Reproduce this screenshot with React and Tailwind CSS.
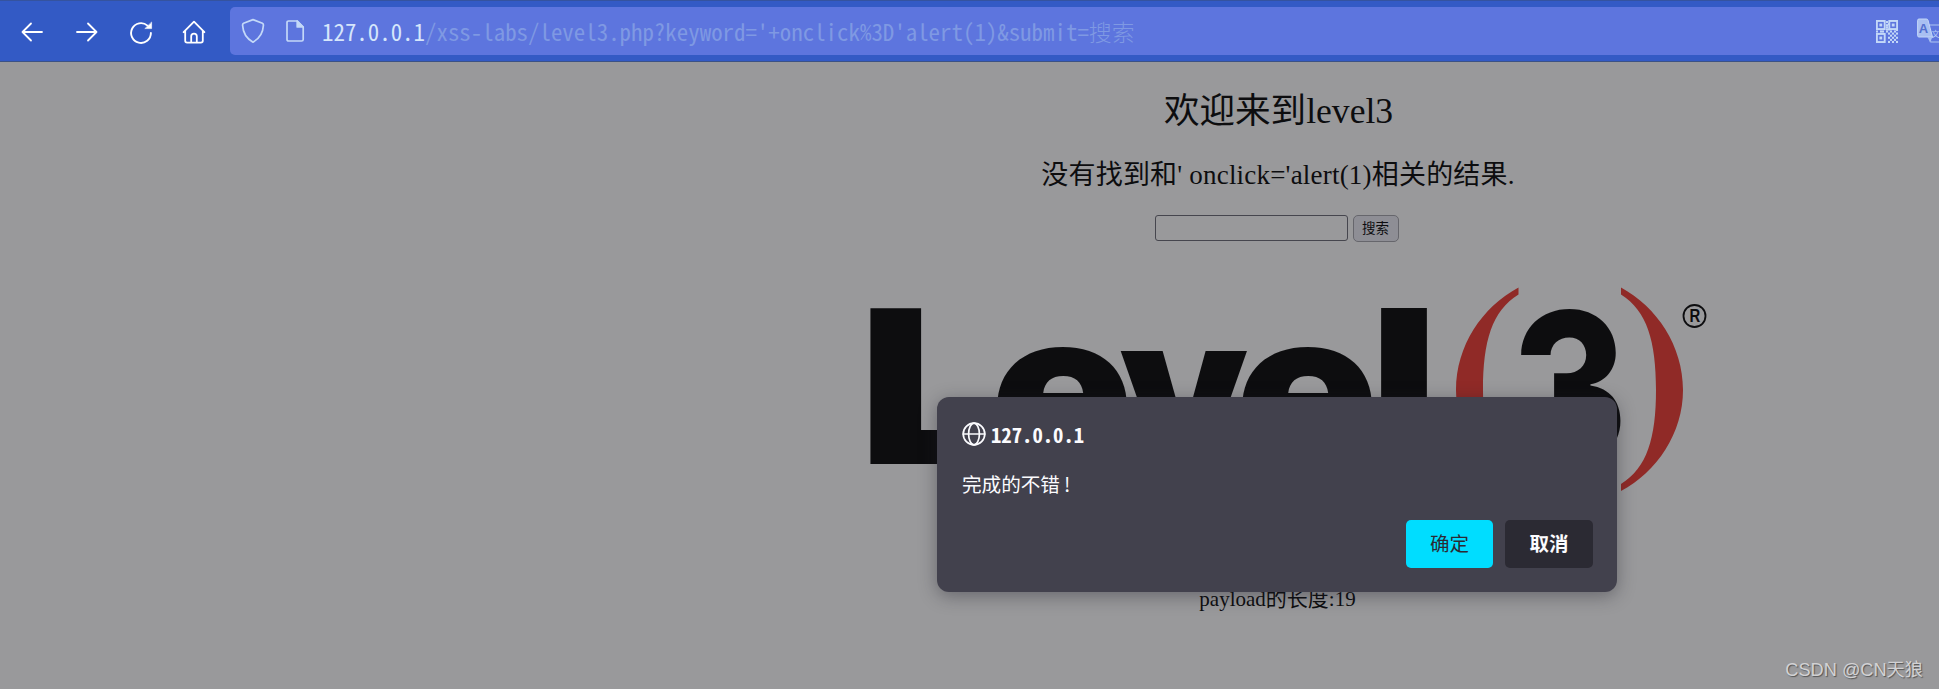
const stroke = { fill: 'none', stroke: 'currentColor', strokeLinecap: 'round', strokeLinejoin: 'round' };

function BackIcon() {
  return (
    <svg className="h-6 w-6" viewBox="0 0 24 24" {...stroke} strokeWidth="1.8">
      <path d="M22 12H2.5M11 3.5L2.5 12L11 20.5" />
    </svg>
  );
}

function ForwardIcon() {
  return (
    <svg className="h-6 w-6" viewBox="0 0 24 24" {...stroke} strokeWidth="1.8">
      <path d="M2 12H21.5M13 3.5L21.5 12L13 20.5" />
    </svg>
  );
}

function ReloadIcon() {
  return (
    <svg className="h-6 w-6" viewBox="0 0 24 24" {...stroke} strokeWidth="1.9">
      <path d="M21.9 13A9.9 9.9 0 1 1 18.5 5.6" />
      <path d="M22.6 2.4V8.6H16.2Z" fill="currentColor" strokeWidth="0.6" />
    </svg>
  );
}

function HomeIcon() {
  return (
    <svg className="h-6 w-6" viewBox="0 0 24 24" {...stroke} strokeWidth="1.8">
      <path d="M1.6 12.2L12 1.6L22.4 12.2M3.2 10.8V20.8Q3.2 22.6 5.2 22.6H18.8Q20.8 22.6 20.8 20.8V10.8M9.2 22.6V16.2Q9.2 13.6 12 13.6Q14.8 13.6 14.8 16.2V22.6" />
    </svg>
  );
}

function ShieldIcon() {
  return (
    <svg className="h-[26px] w-6" viewBox="0 0 24 26" {...stroke} strokeWidth="1.7">
      <path d="M12 1.6L21.4 5.2Q22.6 5.8 22.4 7.4Q21.8 18.6 12 24.2Q2.2 18.6 1.6 7.4Q1.4 5.8 2.6 5.2Z" />
    </svg>
  );
}

function PageIcon() {
  return (
    <svg className="h-6 w-5" viewBox="0 0 20 24" {...stroke} strokeWidth="1.7">
      <path d="M3.6 2H12.2L18.2 8V20.4Q18.2 22 16.6 22H3.6Q2 22 2 20.4V3.6Q2 2 3.6 2Z" />
      <path d="M12.2 2V8H18.2Z" fill="currentColor" />
    </svg>
  );
}

function QrIcon() {
  const cells = [
    [10, 4], [10, 1], [12, 3], [10, 6], [12, 8], [14, 10], [10, 10], [12, 12], [16, 12], [20, 12], [18, 10],
    [18, 14], [14, 14], [10, 8], [0, 10], [4, 10], [6, 10], [14, 18], [18, 18], [12, 16], [16, 16], [20, 16],
    [12, 20], [16, 20], [20, 20], [20, 8.5],
  ];
  return (
    <svg className="h-[23px] w-[22px]" viewBox="0 0 22 22" fill="none" stroke="currentColor" strokeWidth="1.9" preserveAspectRatio="none">
      <rect x="0.9" y="0.9" width="7.8" height="7.8" />
      <rect x="13.3" y="0.9" width="7.8" height="7.8" />
      <rect x="0.9" y="13.3" width="7.8" height="7.8" />
      <g fill="currentColor" stroke="none">
        <rect x="3.4" y="3.4" width="2.8" height="2.8" />
        <rect x="15.8" y="3.4" width="2.8" height="2.8" />
        <rect x="3.4" y="15.8" width="2.8" height="2.8" />
        {cells.map(([x, y]) => (
          <rect key={`${x}-${y}`} x={x} y={y} width="2" height="2" />
        ))}
      </g>
    </svg>
  );
}

function TranslateIcon() {
  return (
    <svg className="h-[26px] w-[32px] shrink-0" viewBox="0 0 32 26">
      <path d="M12 7H30V24H14L11 19" fill="none" stroke="#93abec" strokeWidth="1.5" />
      <path d="M2 1H9.5Q10.6 1 11 2.2L15.5 19H2Q0.6 19 0.6 17.6V2.4Q0.6 1 2 1Z" fill="#a9c0f2" stroke="#c3d6f8" strokeWidth="1" />
      <path d="M11 19H15.5L13 24.5Z" fill="#a9c0f2" />
      <text x="6.4" y="15.2" textAnchor="middle" fontFamily="Liberation Sans" fontWeight="700" fontSize="13" fill="#5470cf">A</text>
      <text x="18.6" y="19.2" textAnchor="middle" fontFamily="Noto Sans CJK SC" fontSize="8.5" fill="#b9cdf6">文</text>
    </svg>
  );
}

function GlobeIcon() {
  return (
    <svg className="h-6 w-6 shrink-0" viewBox="0 0 24 24" {...stroke} strokeWidth="1.7">
      <circle cx="12" cy="12" r="10.8" />
      <ellipse cx="12" cy="12" rx="5.4" ry="10.8" />
      <path d="M1.2 12H22.8" />
    </svg>
  );
}

/* Letters of the wordmark: glyph, left edge, horizontal and vertical scale */
const letters = [
  ['L', 10.4, 1.2, 1],
  ['e', 142.2, 1.105, 0.985],
  ['v', 271.5, 0.952, 0.97],
  ['e', 387.2, 1.105, 0.985],
  ['l', 521.5, 1.09, 1],
];

function LevelLogo() {
  return (
    <svg className="block h-[220px] w-[860px] shrink-0" viewBox="0 0 860 220">
      <g fontFamily="Inter, sans-serif" fontWeight="900" fontSize="214" fill="#0d0d0f">
        {letters.map(([glyph, x, sx, sy]) => (
          <text key={x} transform={`translate(${x} 184) scale(${sx} ${sy})`}>{glyph}</text>
        ))}
      </g>
      <text transform="translate(663 184) scale(0.83 0.98)" fontFamily="Inter, sans-serif" fontWeight="800" fontSize="214" fill="#0d0d0f">3</text>
      <g fill="#902a27">
        <path d="M670.5 7.5C634 27 608 66 608 110C608 153 634 192 670.5 211V204C644 188 635 158 635 110C635 61 644 31 670.5 14.5Z" />
        <path d="M773 7.5C809 27 835 66 835 110C835 153 809 192 773 211V204C799 188 808 158 808 110C808 61 799 31 773 14.5Z" />
      </g>
      <circle cx="846.5" cy="36" r="11" fill="none" stroke="#0d0d0f" strokeWidth="1.8" />
      <text x="847" y="42.5" textAnchor="middle" fontFamily="Liberation Sans" fontWeight="700" fontSize="17.5" fill="#0d0d0f" transform="translate(127 0) scale(0.85 1)">R</text>
    </svg>
  );
}

function Toolbar() {
  return (
    <header className="flex h-[62px] w-full items-center overflow-hidden border-t border-b border-t-[#35539f] border-b-[#3c5285] bg-[#335ac5] text-white">
      <nav className="flex w-[230px] shrink-0 items-center gap-[29px] pt-[2px] pl-[20px]">
        <BackIcon />
        <span className="pl-[2px]"><ForwardIcon /></span>
        <span className="pl-[1px]"><ReloadIcon /></span>
        <HomeIcon />
      </nav>
      <div className="flex h-12 flex-1 items-center overflow-hidden rounded-l-[5px] bg-[#5d75de] pl-[11px] text-[#c3d8f8]">
        <ShieldIcon />
        <span className="ml-[20px]"><PageIcon /></span>
        <p className="ml-[17px] flex-1 pb-[1px] font-['Noto_Sans_CJK_SC',monospace] text-[22.9px] leading-8 whitespace-pre text-[#7f99e3] [font-feature-settings:'hwid']">
          <span className="text-[#d6e6fb]">127.0.0.1</span>/xss-labs/level3.php?keyword='+onclick%3D'alert(1)&amp;submit=<span className="font-light">搜索</span>
        </p>
        <div className="flex w-[63px] shrink-0 items-center gap-[19px]">
          <span className="shrink-0"><QrIcon /></span>
          <TranslateIcon />
        </div>
      </div>
    </header>
  );
}

function AlertDialog() {
  return (
    <section role="alertdialog" className="absolute top-[397px] left-[937px] flex h-[195px] w-[680px] flex-col rounded-[12px] bg-[#42414d] px-[24px] pt-[25px] pb-[24px] text-[#fbfbfe] shadow-[0_4px_18px_rgba(30,30,40,0.4)]">
      <div className="flex h-6 items-center gap-[5px] pl-[1px]">
        <GlobeIcon />
        <h2 className="pb-[1px] font-['Noto_Sans_CJK_SC',monospace] text-[20.7px] leading-6 font-bold [font-feature-settings:'hwid']">127.0.0.1</h2>
      </div>
      <p className="mt-[26px] h-6 pl-[1px] font-['Noto_Sans_CJK_SC',sans-serif] text-[19.6px] leading-6">完成的不错<span className="pl-[4px]">!</span></p>
      <div className="mt-auto flex justify-end gap-[12px] font-['Noto_Sans_CJK_SC',sans-serif] text-[19.5px]">
        <button className="h-12 w-[87px] rounded-[5px] bg-[#00ddff] pb-[2px] text-[#2b2a33]">确定</button>
        <button className="h-12 w-[88px] rounded-[5px] bg-[#2b2a33] pb-[2px] font-bold">取消</button>
      </div>
    </section>
  );
}

export default function App() {
  return (
    <div className="relative h-[689px] w-full overflow-hidden bg-[#99999b]">
      <Toolbar />
      <main className="flex w-[2555px] flex-col items-center font-['Liberation_Serif','Noto_Sans_CJK_SC',serif] text-[#0d0d0f]">
        <h1 className="mt-[25px] h-[48px] pl-[2px] text-[35.6px] leading-[48px] whitespace-pre">欢迎来到level3</h1>
        <h2 className="mt-[22px] h-[36px] pl-[1px] text-[27px] leading-[36px] tracking-[0.2px] whitespace-pre">没有找到和' onclick='alert(1)相关的结果.</h2>
        <form className="mt-[22px] flex h-[27px] items-start gap-[5px] pr-[2px]">
          <input className="h-[26px] w-[193px] rounded-[3px] border border-[#46464e] bg-[#99999b] outline-none" />
          <button type="button" className="h-[27px] w-[46px] rounded-[5px] border border-[#66666c] bg-[#8e8e95] text-[13.5px] leading-none">搜索</button>
        </form>
        <div className="mt-[38px] flex w-[860px]">
          <LevelLogo />
        </div>
        <h3 className="mt-[85px] h-[28px] text-[21px] leading-[28px]">payload的长度:19</h3>
      </main>
      <AlertDialog />
      <p className="absolute right-[16px] bottom-[7px] font-['Liberation_Sans','Noto_Sans_CJK_SC',sans-serif] text-[18.2px] leading-6 whitespace-pre text-[#d2d2d4] [text-shadow:1px_1px_1px_#555]">CSDN @CN天狼</p>
    </div>
  );
}
